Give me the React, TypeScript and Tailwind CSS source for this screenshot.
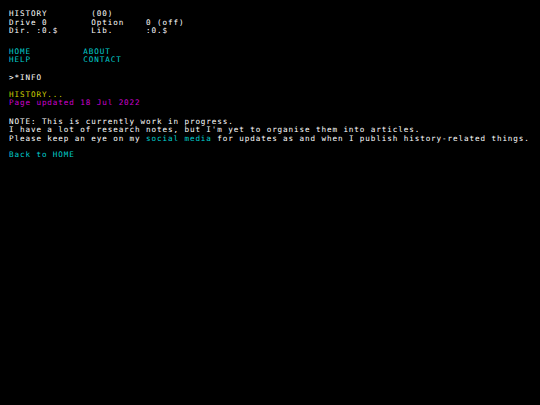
export default function App() {
  const font = { fontFamily: '"DejaVu Sans Mono", "Liberation Mono", monospace' };
  return (
    <div
      className="min-h-screen w-full bg-black text-white text-[7.6px] leading-[8.7px] tracking-[0.91px] pl-[9px] pt-[10px] whitespace-pre antialiased"
      style={font}
    >
      <div>
        <div>{"HISTORY        (00)"}</div>
        <div>{"Drive 0        Option    0 (off)"}</div>
        <div>{"Dir. :0.$      Lib.      :0.$"}</div>
      </div>
      <div className="mt-[11.4px] flex flex-col text-[#00d0d0]">
        <div className="flex">
          <a className="w-[74.3px]">HOME</a>
          <a>ABOUT</a>
        </div>
        <div className="flex">
          <a className="w-[74.3px]">HELP</a>
          <a>CONTACT</a>
        </div>
      </div>
      <div className="mt-[9.1px]">{">*INFO"}</div>
      <div className="mt-[7.8px]">
        <div className="text-[#d0d000]">HISTORY...</div>
        <div className="text-[#d000d0]">Page updated 18 Jul 2022</div>
      </div>
      <div className="mt-[9.6px]">
        <div>NOTE: This is currently work in progress.</div>
        <div>I have a lot of research notes, but I'm yet to organise them into articles.</div>
        <div>
          Please keep an eye on my <a className="text-[#00d0d0]">social media</a> for updates as and when I publish history-related things.
        </div>
      </div>
      <div className="mt-[7.8px]">
        <a className="text-[#00d0d0]">Back to HOME</a>
      </div>
    </div>
  );
}
